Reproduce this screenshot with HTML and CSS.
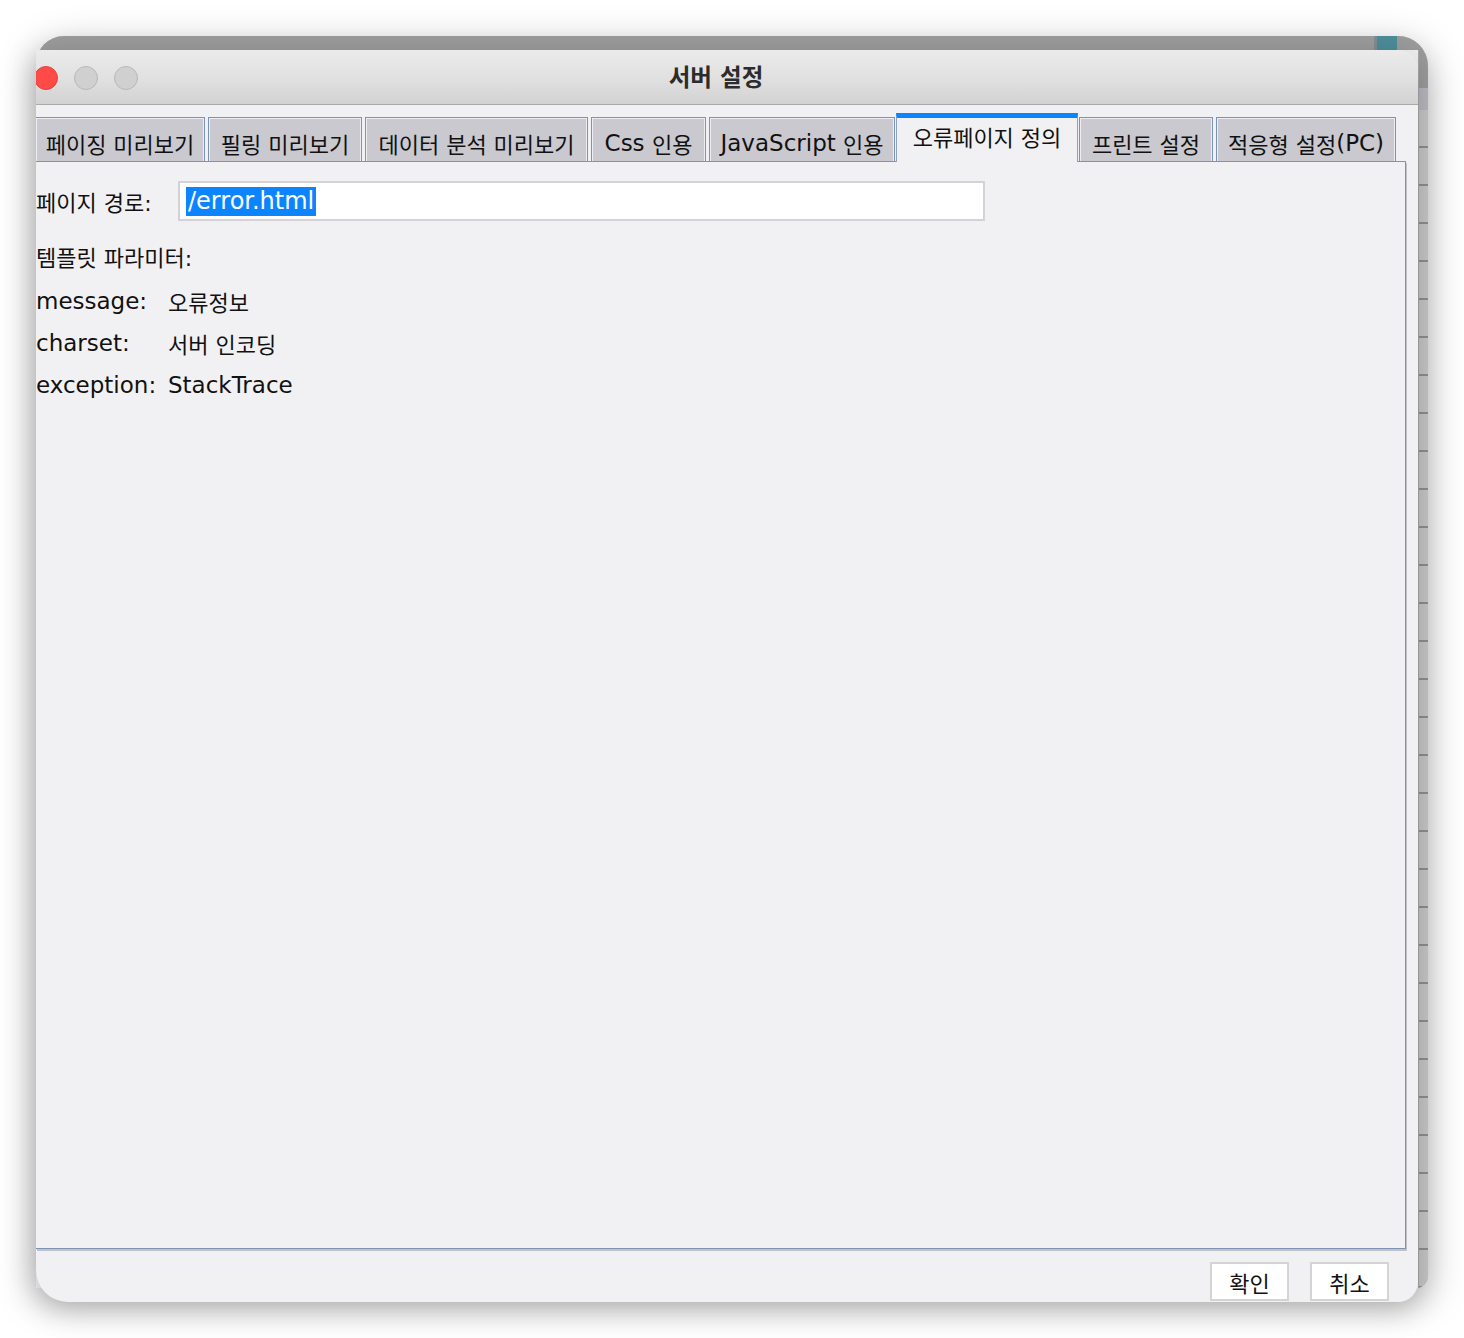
FILE: index.html
```html
<!DOCTYPE html>
<html lang="ko">
<head>
<meta charset="utf-8">
<title>서버 설정</title>
<link rel="stylesheet" href="styles.css">
</head>
<body>
  <div class="backwin">
    <div class="back-top"><span class="back-teal"></span></div>
    <div class="back-body">
      <div class="back-fill"></div>
      <div class="back-strip">
        <div class="strip-dark"></div>
        <div class="strip-light"></div>
        <div class="strip-ruler"></div>
      </div>
    </div>
  </div>

  <div class="dialog">
    <div class="titlebar">
      <div class="lights">
        <span class="light red"></span>
        <span class="light"></span>
        <span class="light"></span>
      </div>
      <div class="title">서버 설정</div>
    </div>

    <div class="tabs">
      <div class="tab t1 ko">페이징 미리보기</div>
      <div class="tab t2 ko">필링 미리보기</div>
      <div class="tab t3 ko">데이터 분석 미리보기</div>
      <div class="tab t4">Css&nbsp;<span class="ko">인용</span></div>
      <div class="tab t5">JavaScript&nbsp;<span class="ko">인용</span></div>
      <div class="tab t6 selected ko">오류페이지 정의</div>
      <div class="tab t7 ko">프린트 설정</div>
      <div class="tab t8"><span class="ko">적응형 설정</span>(PC)</div>
    </div>

    <div class="panel">
      <div class="path-row">
        <div class="path-label ko">페이지 경로:</div>
        <div class="field"><span class="sel">/error.html</span></div>
      </div>
      <div class="params-title ko">템플릿 파라미터:</div>
      <div class="params">
        <div class="pk">message:</div><div class="pv ko">오류정보</div>
        <div class="pk">charset:</div><div class="pv ko">서버 인코딩</div>
        <div class="pk">exception:</div><div class="pv">StackTrace</div>
      </div>
    </div>

    <div class="buttons">
      <button class="btn ko">확인</button>
      <button class="btn ko">취소</button>
    </div>
  </div>
</body>
</html>
```

FILE: styles.css
```css
html, body {
  margin: 0;
  padding: 0;
}
body {
  width: 1464px;
  height: 1338px;
  overflow: hidden;
  background: #ffffff;
  position: relative;
  font-family: "DejaVu Sans", "Noto Sans CJK KR", sans-serif;
  font-size: 23px;
  color: #111111;
}
.ko {
  font-size: 22px;
}

/* background window (behind the dialog) */
.backwin {
  position: absolute;
  left: 36px;
  top: 36px;
  width: 1392px;
  height: 1252px;
  border-radius: 28px 30px 12px 0;
  overflow: hidden;
  background: #c6c6c6;
  box-shadow: 0 10px 38px rgba(0, 0, 0, 0.28);
  display: flex;
  flex-direction: column;
}
.back-top {
  height: 14px;
  background: #9b9b9b;
  display: flex;
  justify-content: flex-end;
  padding-right: 31px;
}
.back-teal {
  width: 20px;
  height: 14px;
  background: #4d8c98;
  border-left: 3px solid #7d8e92;
}
.back-body {
  flex: 1;
  display: flex;
}
.back-fill {
  flex: 1;
  background: #f1f1f3;
}
.back-strip {
  width: 10px;
  display: flex;
  flex-direction: column;
  border-left: 1px solid #a9a9a9;
  box-sizing: border-box;
}
.strip-dark {
  height: 38px;
  background: #9b9b9b;
}
.strip-light {
  height: 22px;
  background: #b7b7bf;
}
.strip-ruler {
  flex: 1;
  background: repeating-linear-gradient(to bottom, #c6c6c6 0, #c6c6c6 36px, #8e8e8e 36px, #8e8e8e 38px);
}

/* dialog */
.dialog {
  position: absolute;
  left: 36px;
  top: 50px;
  width: 1382px;
  height: 1252px;
  border-radius: 0 20px 20px 32px;
  overflow: hidden;
  background: #f1f1f3;
  box-shadow: 0 8px 30px rgba(0, 0, 0, 0.22);
  display: flex;
  flex-direction: column;
}
.titlebar {
  height: 54px;
  flex: none;
  border-bottom: 1px solid #a9a9a9;
  background: linear-gradient(to bottom, #ebebeb 0%, #e0e0e0 55%, #d2d2d2 100%);
  display: flex;
  align-items: center;
}
.lights {
  width: 120px;
  margin-left: -2px;
  display: flex;
  gap: 16px;
  padding-top: 2px;
}
.light {
  width: 24px;
  height: 24px;
  border-radius: 50%;
  box-sizing: border-box;
  background: #d0d0d0;
  border: 1px solid #b8b8b8;
}
.light.red {
  background: #ff4b48;
  border-color: #e4413d;
}
.title {
  flex: 1;
  text-align: center;
  padding-right: 140px;
  padding-bottom: 2px;
  font-size: 23.5px;
  font-weight: bold;
  color: #2c2c2c;
}

/* tabs */
.tabs {
  flex: none;
  display: flex;
  align-items: flex-end;
  gap: 3px;
  padding-top: 8px;
  margin-bottom: -1px;
  position: relative;
  z-index: 2;
}
.tab {
  box-sizing: border-box;
  height: 45px;
  padding-top: 7px;
  display: flex;
  align-items: center;
  justify-content: center;
  white-space: nowrap;
  background: #c9c9cf;
  border: 1px solid #7b93b5;
  box-shadow: inset 1px 1px 0 #eceef3, inset -1px 0 0 #eceef3;
  color: #111111;
}
.tab.t1 { width: 169px; border-left: none; }
.tab.t2 { width: 154px; }
.tab.t3 { width: 223px; }
.tab.t4 { width: 115px; }
.tab.t5 { width: 186px; }
.tab.t6 { width: 182px; margin: 0 -2px; }
.tab.t7 { width: 134px; }
.tab.t8 { width: 180px; }
.tab.selected {
  height: 49px;
  padding-top: 0;
  padding-bottom: 8px;
  background: #f1f1f3;
  border: none;
  border-left: 1px solid #8fa1bb;
  border-right: 1px solid #8fa1bb;
  border-top: 5px solid #0a84ff;
  box-shadow: none;
  position: relative;
  z-index: 3;
}

/* content panel */
.panel {
  flex: none;
  box-sizing: border-box;
  width: 1370px;
  height: 1088px;
  border-top: 1px solid #7b93b5;
  border-right: 1px solid #7b93b5;
  border-bottom: 1px solid #7b93b5;
  box-shadow: 1px 2px 0 #c2c2c6;
  padding-top: 19px;
  position: relative;
  z-index: 1;
}
.path-row {
  display: flex;
  align-items: center;
  height: 40px;
}
.path-label {
  width: 142px;
  flex: none;
}
.field {
  width: 807px;
  height: 40px;
  box-sizing: border-box;
  border: 2px solid #d3d3d7;
  background: #ffffff;
  display: flex;
  align-items: center;
  padding-left: 6px;
}
.sel {
  background: #0b84fe;
  color: #ffffff;
  font-size: 24px;
  height: 29px;
  line-height: 29px;
  padding: 0 2px;
}
.params-title {
  margin-top: 17px;
  height: 42px;
  line-height: 42px;
}
.params {
  display: grid;
  grid-template-columns: 132px auto;
  grid-auto-rows: 42px;
  align-items: center;
}

/* buttons */
.buttons {
  flex: none;
  display: flex;
  justify-content: flex-end;
  gap: 21px;
  margin-top: 13px;
  padding-right: 29px;
}
.btn {
  width: 79px;
  height: 39px;
  box-sizing: border-box;
  background: #ffffff;
  border: 2px solid #d4d4d4;
  font-family: "DejaVu Sans", "Noto Sans CJK KR", sans-serif;
  color: #111111;
  padding: 0;
}
```
